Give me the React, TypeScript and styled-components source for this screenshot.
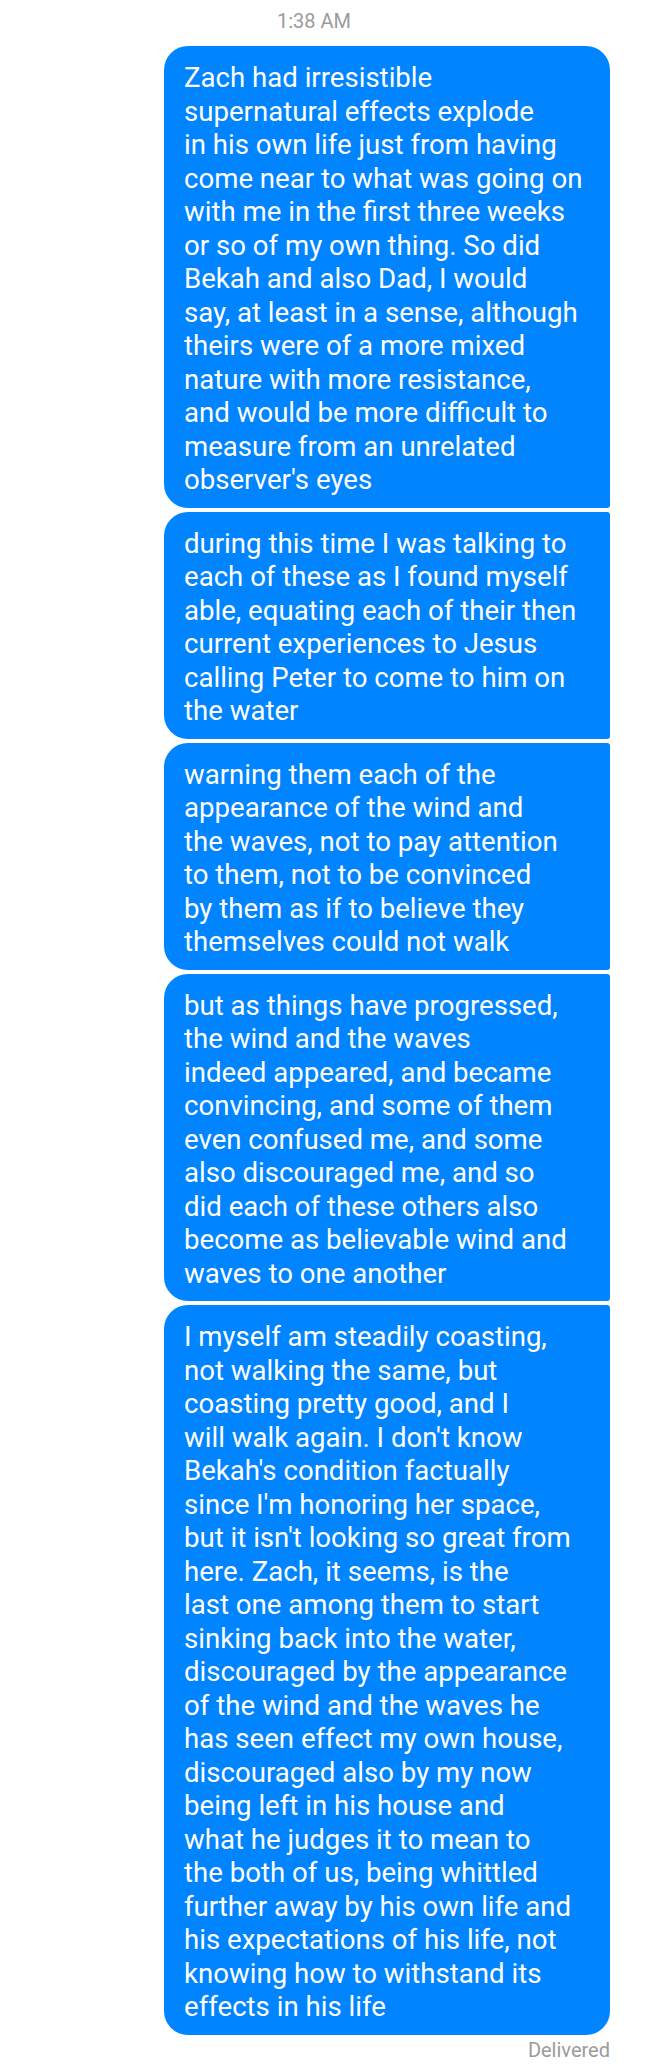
import React from "react";
import styled, { createGlobalStyle } from "styled-components";

const GlobalStyle = createGlobalStyle`
  html, body {
    margin: 0;
    padding: 0;
    background: #ffffff;
  }
  body {
    font-family: Roboto, "Noto Sans", "Liberation Sans", sans-serif;
  }
`;

const Screen = styled.main`
  width: 648px;
  min-height: 2068px;
  display: flex;
  flex-direction: column;
  background: #ffffff;
`;

const Timestamp = styled.div`
  padding: 9px 20px 0 0;
  text-align: center;
  font-size: 20px;
  line-height: 24px;
  color: #9b9b9b;
`;

const Thread = styled.section`
  display: flex;
  flex-direction: column;
  gap: 4px;
  margin: 13px 38px 0 164px;
`;

const Bubble = styled.div<{ $first: boolean; $last: boolean }>`
  background: #0084ff;
  color: #ffffff;
  padding: 15px 20px 11px;
  font-size: 27.6px;
  line-height: 33.5px;
  border-radius: 24px ${(p) => (p.$first ? 24 : 3)}px
    ${(p) => (p.$last ? 24 : 3)}px 24px;
`;

const Line = styled.span`
  display: block;
  white-space: nowrap;
`;

const Status = styled.div`
  margin: 3px 38px 0 0;
  text-align: right;
  font-size: 20px;
  line-height: 24px;
  color: #9b9b9b;
`;

const messages: string[][] = [
  [
    "Zach had irresistible",
    "supernatural effects explode",
    "in his own life just from having",
    "come near to what was going on",
    "with me in the first three weeks",
    "or so of my own thing. So did",
    "Bekah and also Dad, I would",
    "say, at least in a sense, although",
    "theirs were of a more mixed",
    "nature with more resistance,",
    "and would be more difficult to",
    "measure from an unrelated",
    "observer's eyes",
  ],
  [
    "during this time I was talking to",
    "each of these as I found myself",
    "able, equating each of their then",
    "current experiences to Jesus",
    "calling Peter to come to him on",
    "the water",
  ],
  [
    "warning them each of the",
    "appearance of the wind and",
    "the waves, not to pay attention",
    "to them, not to be convinced",
    "by them as if to believe they",
    "themselves could not walk",
  ],
  [
    "but as things have progressed,",
    "the wind and the waves",
    "indeed appeared, and became",
    "convincing, and some of them",
    "even confused me, and some",
    "also discouraged me, and so",
    "did each of these others also",
    "become as believable wind and",
    "waves to one another",
  ],
  [
    "I myself am steadily coasting,",
    "not walking the same, but",
    "coasting pretty good, and I",
    "will walk again. I don't know",
    "Bekah's condition factually",
    "since I'm honoring her space,",
    "but it isn't looking so great from",
    "here. Zach, it seems, is the",
    "last one among them to start",
    "sinking back into the water,",
    "discouraged by the appearance",
    "of the wind and the waves he",
    "has seen effect my own house,",
    "discouraged also by my now",
    "being left in his house and",
    "what he judges it to mean to",
    "the both of us, being whittled",
    "further away by his own life and",
    "his expectations of his life, not",
    "knowing how to withstand its",
    "effects in his life",
  ],
];

export default function App() {
  return (
    <>
      <GlobalStyle />
      <Screen>
        <Timestamp>1:38 AM</Timestamp>
        <Thread>
          {messages.map((lines, i) => (
            <Bubble key={i} $first={i === 0} $last={i === messages.length - 1}>
              {lines.map((l, j) => (
                <Line key={j}>{l}</Line>
              ))}
            </Bubble>
          ))}
        </Thread>
        <Status>Delivered</Status>
      </Screen>
    </>
  );
}
